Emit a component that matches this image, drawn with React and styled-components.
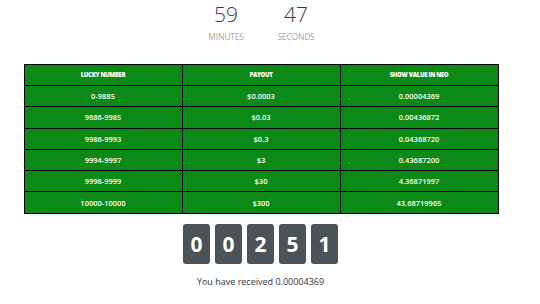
import styled, { createGlobalStyle } from "styled-components"

const GlobalStyle = createGlobalStyle`
    body {
        margin: 0;
        background: #ffffff;
        font-family: "Open Sans", "Liberation Sans", sans-serif;
    }
`

const rows = [
    ["0-9885", "$0.0003", "0.00004369"],
    ["9886-9985", "$0.03", "0.00436872"],
    ["9986-9993", "$0.3", "0.04368720"],
    ["9994-9997", "$3", "0.43687200"],
    ["9998-9999", "$30", "4.36871997"],
    ["10000-10000", "$300", "43.68719965"],
]

const digits = ["0", "0", "2", "5", "1"]

const App = () => {
    return <>
        <GlobalStyle />
        <Page>
            <Timer>
                <TimeUnit>
                    <TimeValue>59</TimeValue>
                    <TimeLabel>Minutes</TimeLabel>
                </TimeUnit>
                <TimeUnit>
                    <TimeValue>47</TimeValue>
                    <TimeLabel>Seconds</TimeLabel>
                </TimeUnit>
            </Timer>
            <PayoutTable>
                <thead>
                    <tr>
                        <HeadCell>Lucky Number</HeadCell>
                        <HeadCell>Payout</HeadCell>
                        <HeadCell>Show Value in NEO</HeadCell>
                    </tr>
                </thead>
                <tbody>
                    {rows.map((r) => <tr key={r[0]}>
                        {r.map((c, i) => <Cell key={i}>{c}</Cell>)}
                    </tr>)}
                </tbody>
            </PayoutTable>
            <Digits>
                {digits.map((d, i) => <DigitBox key={i}>{d}</DigitBox>)}
            </Digits>
            <Received>You have received 0.00004369</Received>
        </Page>
    </>
}

const Page = styled.div`
    width: 521px;
    display: flex;
    flex-direction: column;
    align-items: center;
`
const Timer = styled.div`
    display: flex;
    gap: 32px;
    margin-left: 1px;
    padding-top: 2px;
    height: 62px;
`
const TimeUnit = styled.div`
    display: flex;
    flex-direction: column;
    align-items: center;
    width: 38px;
`
const TimeValue = styled.div`
    font-size: 21px;
    font-weight: 300;
    color: #3d3d3d;
    line-height: 24px;
`
const TimeLabel = styled.div`
    font-size: 8.5px;
    text-transform: uppercase;
    color: #a8a8a8;
    letter-spacing: -0.2px;
    margin-top: 5px;
`
const PayoutTable = styled.table`
    width: 475px;
    border-collapse: collapse;
    background: #0b8a17;
    border: 1px solid #000;
    table-layout: fixed;
    margin-left: 1px;
`
const HeadCell = styled.th`
    height: 20px;
    padding: 0;
    border: 1px solid #000;
    color: #fff;
    font-size: 6px;
    font-weight: 800;
    letter-spacing: -0.3px;
    text-transform: uppercase;
    text-align: center;
`
const Cell = styled.td`
    height: 20.3px;
    padding: 0;
    border: 1px solid #000;
    color: #fff;
    font-size: 7.5px;
    font-weight: 600;
    text-align: center;
`
const Digits = styled.div`
    display: flex;
    gap: 5px;
    margin-top: 10px;
`
const DigitBox = styled.div`
    width: 27px;
    height: 40px;
    border-radius: 3px;
    background: #4b5356;
    color: #fff;
    font-size: 21px;
    font-weight: 700;
    display: flex;
    align-items: center;
    justify-content: center;
`
const Received = styled.div`
    margin-top: 11px;
    font-size: 9px;
    color: #333;
`

export default App
